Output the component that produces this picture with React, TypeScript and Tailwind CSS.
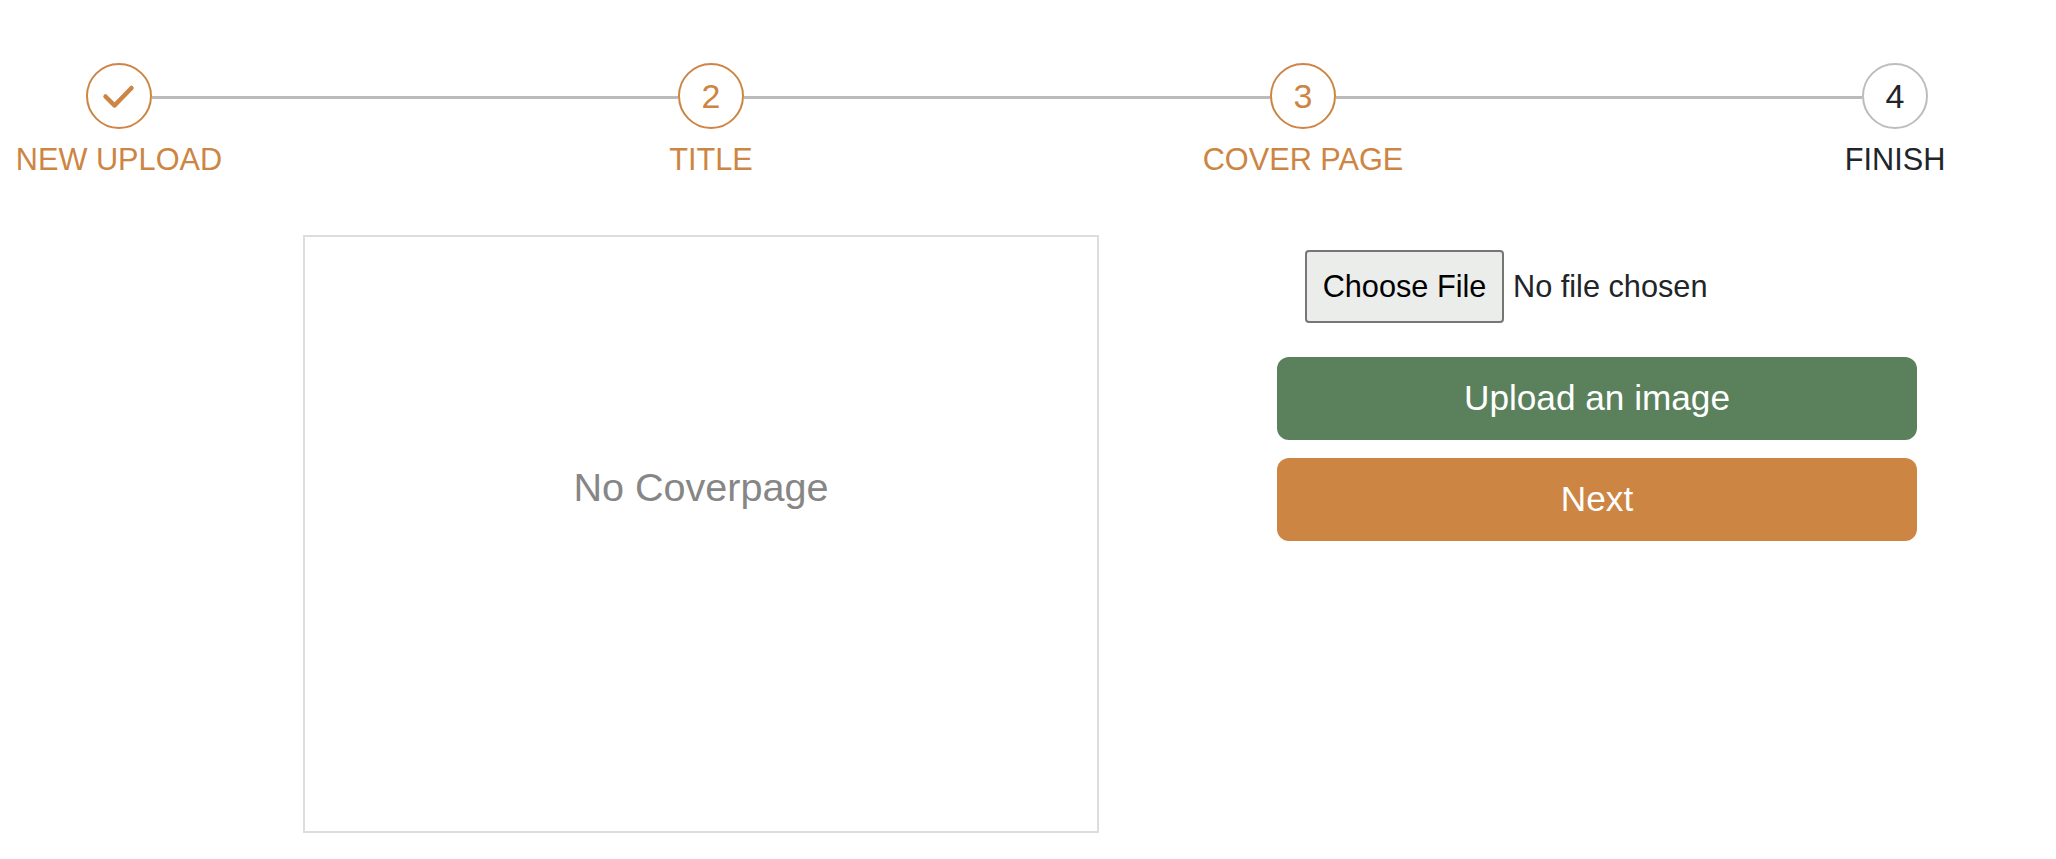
import React from "react";

const steps = [
  { label: "NEW UPLOAD", done: true, active: true },
  { label: "TITLE", n: "2", active: true },
  { label: "COVER PAGE", n: "3", active: true },
  { label: "FINISH", n: "4", active: false },
];

function Circle({ s }: { s: (typeof steps)[number] }) {
  return (
    <div
      className={
        "flex h-[66px] w-[66px] shrink-0 items-center justify-center rounded-full border-2 bg-white text-[34px] " +
        (s.active ? "border-[#cd8544] text-[#cd8544]" : "border-[#bdbdbd] text-[#212529]")
      }
    >
      {s.done ? (
        <svg width="34" height="34" viewBox="0 0 34 34" fill="none" className="mt-[3px]">
          <path d="M3.5 15.5 L12.5 24.5 L29.5 7" stroke="#cd8544" strokeWidth="4.5" strokeLinecap="round" strokeLinejoin="round" />
        </svg>
      ) : (
        s.n
      )}
    </div>
  );
}

export default function App() {
  return (
    <div className="h-[859px] w-[2056px] overflow-hidden bg-white font-['Liberation_Sans',Arial,sans-serif] text-[#212529]">
      <div className="ml-[86px] flex w-[1842px] items-center pt-[63px]">
        {steps.map((s, i) => (
          <React.Fragment key={s.label}>
            <Circle s={s} />
            {i < steps.length - 1 && <div className="mt-[3px] h-[3px] flex-1 bg-[#bbbbbb]" />}
          </React.Fragment>
        ))}
      </div>
      <div className="mt-[14px] flex w-[2014px] justify-between">
        {steps.map((s) => (
          <div
            key={s.label}
            className={"w-[238px] text-center text-[30.7px] leading-[34px] " + (s.active ? "text-[#cd8544]" : "text-[#212529]")}
          >
            {s.label}
          </div>
        ))}
      </div>
      <div className="mt-[58px] flex">
        <div className="ml-[303px] flex h-[598px] w-[796px] items-center justify-center border-2 border-[#dddddd] pb-[92px] text-[39.6px] text-[#868686]">
          No Coverpage
        </div>
        <div className="ml-[178px] flex w-[640px] flex-col">
          <div className="mt-[15px] ml-[28px] flex items-center">
            <button className="h-[73px] w-[199px] rounded-[4px] border-2 border-[#767676] bg-[#ebedeb] pt-[2px] text-center text-[30.7px] text-black">
              Choose File
            </button>
            <span className="ml-[9px] pt-[2px] text-[30.7px]">No file chosen</span>
          </div>
          <button className="mt-[34px] h-[83px] w-full rounded-[12px] bg-[#5b805c] text-[35.2px] text-white">
            Upload an image
          </button>
          <button className="mt-[18px] h-[83px] w-full rounded-[12px] bg-[#cd8544] text-[35.2px] text-white">
            Next
          </button>
        </div>
      </div>
    </div>
  );
}
